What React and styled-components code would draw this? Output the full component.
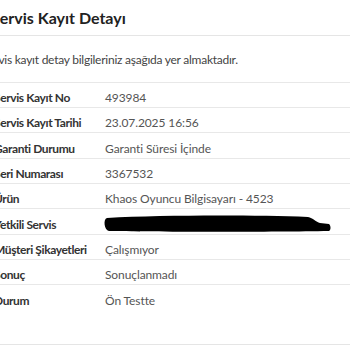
import React from "react";
import styled, { createGlobalStyle } from "styled-components";

const Global = createGlobalStyle`
  html, body { margin: 0; padding: 0; background: #fff; }
  body { font-family: Lato, "Open Sans", sans-serif; color: #333; overflow: hidden; }
`;

const Modal = styled.div`
  width: 380px;
  background: #fff;
`;

const Header = styled.div`
  padding: 9px 0 8px 0;
  border-bottom: 1px solid #e5e5e5;
`;

const Title = styled.h4`
  margin: 0 0 0 -9px;
  font-size: 16px;
  font-weight: 700;
  line-height: 18px;
  color: #222;
`;

const Body = styled.div`
  padding: 15px 0 0 0;
  border-bottom: 1px solid #e5e5e5;
  height: 309px;
  box-sizing: border-box;
`;

const Intro = styled.p`
  margin: 0 0 12.7px -18px;
  font-size: 12px;
  letter-spacing: -0.25px;
  line-height: 18px;
  color: #444;
`;

const Table = styled.div`
  display: grid;
  grid-template-columns: 111px 1fr;
  margin-left: -6px;
`;

const Cell = styled.div`
  position: relative;
  border-top: 1px solid #e8e8e8;
  padding: 6.4px 0 0 0;
  line-height: 17.93px;
  font-size: 12px;
  font-weight: ${(p) => (p.$label ? 700 : 400)};
  letter-spacing: ${(p) => (p.$label ? "-0.4px" : "-0.1px")};
  color: ${(p) => (p.$label ? "#333" : "#555")};
  white-space: nowrap;
`;

const Redaction = styled.svg`
  position: absolute;
  left: -2px;
  top: 5px;
  width: 228px;
  height: 19px;
`;

const rows = [
  ["Servis Kayıt No", "493984"],
  ["Servis Kayıt Tarihi", "23.07.2025 16:56"],
  ["Garanti Durumu", "Garanti Süresi İçinde"],
  ["Seri Numarası", "3367532"],
  ["Ürün", "Khaos Oyuncu Bilgisayarı - 4523"],
  ["Yetkili Servis", null],
  ["Müşteri Şikayetleri", "Çalışmıyor"],
  ["Sonuç", "Sonuçlanmadı"],
  ["Durum", "Ön Testte"],
];

export default function App() {
  return (
    <>
      <Global />
      <Modal>
        <Header>
          <Title>Servis Kayıt Detayı</Title>
        </Header>
        <Body>
          <Intro>Servis kayıt detay bilgileriniz aşağıda yer almaktadır.</Intro>
          <Table>
            {rows.map(([label, value]) => (
              <React.Fragment key={label}>
                <Cell $label>{label}</Cell>
                <Cell>
                  {value ?? (
                    <Redaction viewBox="0 0 228 19">
                      <path
                        d="M4 4 C60 1 150 1 205 3 C210 4 213 8 217 9 L226 10 C228 12 228 16 226 17 C170 18 60 18 6 17 C1 16 0 5 4 4 Z"
                        fill="#000"
                      />
                    </Redaction>
                  )}
                </Cell>
              </React.Fragment>
            ))}
          </Table>
        </Body>
      </Modal>
    </>
  );
}
